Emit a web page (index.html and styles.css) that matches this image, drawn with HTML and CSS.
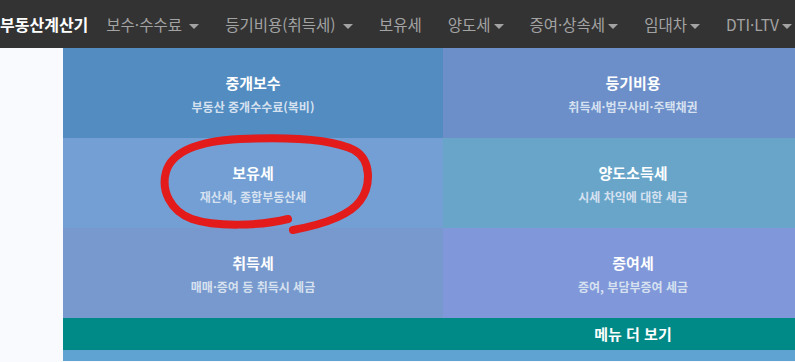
FILE: index.html
```html
<!DOCTYPE html>
<html lang="ko">
<head>
    <meta charset="UTF-8">
    <meta name="viewport" content="width=device-width, initial-scale=1.0">
    <title>부동산계산기</title>
    <link rel="stylesheet" href="styles.css">
</head>
<body>
    <nav class="navbar">
        <a class="brand" href="#">부동산계산기</a>
        <ul class="nav">
            <li class="item first">보수·수수료 <span class="caret"></span></li>
            <li class="item">등기비용(취득세) <span class="caret"></span></li>
            <li class="item">보유세</li>
            <li class="item">양도세<span class="caret"></span></li>
            <li class="item">증여·상속세<span class="caret"></span></li>
            <li class="item">임대차<span class="caret"></span></li>
            <li class="item">DTI·LTV<span class="caret"></span></li>
        </ul>
    </nav>

    <div class="main">
        <div class="tiles">
            <a class="tile t1" href="#">
                <strong>중개보수</strong>
                <span>부동산 중개수수료(복비)</span>
            </a>
            <a class="tile t2" href="#">
                <strong>등기비용</strong>
                <span>취득세·법무사비·주택채권</span>
            </a>
            <a class="tile t3" href="#">
                <strong>보유세</strong>
                <span>재산세, 종합부동산세</span>
            </a>
            <a class="tile t4" href="#">
                <strong>양도소득세</strong>
                <span>시세 차익에 대한 세금</span>
            </a>
            <a class="tile t5" href="#">
                <strong>취득세</strong>
                <span>매매·증여 등 취득시 세금</span>
            </a>
            <a class="tile t6" href="#">
                <strong>증여세</strong>
                <span>증여, 부담부증여 세금</span>
            </a>
        </div>
        <div class="more">
            <span></span>
            <a href="#">메뉴 더 보기</a>
        </div>
        <div class="below"></div>

        <!-- 빨간 동그라미 표시 -->
        <svg class="mark" width="795" height="314" viewBox="0 48 795 314">
            <path d="M288,219 C260,226 215,227 192,219 C170,211 161,190 166,172 C172,151 200,141 240,139 C285,137 332,139 354,150 C372,160 371,186 360,201 C349,216 320,225 293,230"
                  fill="none" stroke="#e31b1b" stroke-width="8" stroke-linecap="round" stroke-linejoin="round"/>
        </svg>
    </div>
</body>
</html>
```

FILE: styles.css
```css
html, body {
    margin: 0;
    overflow: hidden;
    height: 100%;
}
body {
    font-family: "Noto Sans CJK KR", "Noto Sans", sans-serif;
    background: #f8fafd;
}
a {
    text-decoration: none;
    color: inherit;
}
.navbar {
    height: 48px;
    background: #333;
    display: flex;
    align-items: center;
    white-space: nowrap;
    overflow: hidden;
}
.brand {
    color: #fff;
    font-size: 16px;
    font-weight: bold;
    margin-right: 18px;
}
.nav {
    display: flex;
    margin: 0;
    padding: 0;
    list-style: none;
}
.item {
    color: #a3a3a3;
    font-size: 15.5px;
    padding: 0 13px;
}
.item.first {
    padding-left: 0;
}
.caret {
    display: inline-block;
    width: 0;
    height: 0;
    margin-left: 3px;
    vertical-align: middle;
    border-top: 5px solid #a3a3a3;
    border-left: 5px solid transparent;
    border-right: 5px solid transparent;
}
.main {
    position: relative;
    padding-left: 63px;
    height: calc(100% - 48px);
    overflow: hidden;
}
.tiles {
    display: grid;
    grid-template-columns: 380px 352px;
    grid-auto-rows: 90px;
}
.tile {
    display: flex;
    flex-direction: column;
    align-items: center;
    padding-top: 23px;
    box-sizing: border-box;
    color: #fff;
}
.t2, .t4, .t6 {
    margin-right: -28px;
}
.tile strong {
    font-size: 15px;
    font-weight: bold;
    line-height: 24px;
}
.tile span {
    font-size: 12px;
    font-weight: bold;
    color: #d6e1f0;
    line-height: 24px;
}
.t1 { background: #528cc1; }
.t2 { background: #6c8ec9; }
.t3 { background: #739fd4; }
.t4 { background: #68a5c9; }
.t5 { background: #7899cd; }
.t6 { background: #8098da; }
.more {
    display: grid;
    grid-template-columns: 380px 380px;
    height: 32px;
    background: #008a87;
}
.more a {
    color: #fff;
    font-size: 15px;
    font-weight: bold;
    line-height: 32px;
    text-align: center;
}
.below {
    height: 11px;
    background: #5fa3d2;
}
.mark {
    position: absolute;
    left: 0;
    top: 0;
    pointer-events: none;
}
```
